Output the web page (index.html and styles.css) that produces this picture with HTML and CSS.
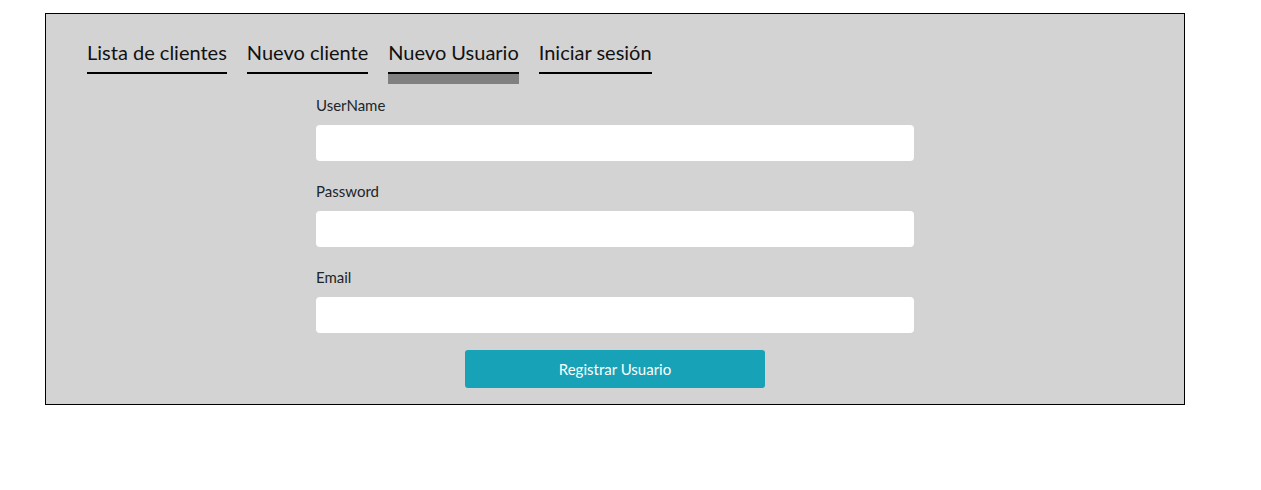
FILE: index.html
```html
<!DOCTYPE html>
<html lang="es">
<head>
<meta charset="utf-8">
<title>Nuevo Usuario</title>
<link rel="stylesheet" href="styles.css">
</head>
<body>
<div class="page">
  <div class="panel">
    <nav class="tabs">
      <a class="tab" href="#">Lista de clientes</a>
      <a class="tab" href="#">Nuevo cliente</a>
      <a class="tab tab-active" href="#">Nuevo Usuario</a>
      <a class="tab" href="#">Iniciar sesión</a>
    </nav>
    <form class="form">
      <div class="field">
        <label class="label" for="u">UserName</label>
        <input class="input" id="u" type="text">
      </div>
      <div class="field">
        <label class="label" for="p">Password</label>
        <input class="input" id="p" type="password">
      </div>
      <div class="field field-last">
        <label class="label" for="e">Email</label>
        <input class="input" id="e" type="email">
      </div>
      <div class="actions">
        <button class="btn" type="button">Registrar Usuario</button>
      </div>
    </form>
  </div>
</div>
</body>
</html>
```
FILE: styles.css
```css
html, body {
  margin: 0;
  padding: 0;
  background: #fff;
}
body {
  font-family: "Segoe UI", "Lato", "Liberation Sans", sans-serif;
  color: #212529;
}
.page {
  padding: 13px 0 0 45px;
}
.panel {
  box-sizing: border-box;
  width: 1140px;
  height: 392px;
  border: 1px solid #000;
  background: #d3d3d3;
  padding: 25px 41px 0;
}
.tabs {
  display: flex;
  gap: 20px;
}
.tab {
  font-size: 20px;
  line-height: 27px;
  padding-bottom: 6px;
  color: #111;
  text-decoration: none;
  border-bottom: 2px solid #000;
}
.tab-active {
  box-shadow: 0 10px 0 #808080;
}
.form {
  width: 598px;
  margin: 20px auto 0;
}
.field {
  margin-bottom: 19px;
}
.field-last {
  margin-bottom: 17px;
}
.label {
  display: block;
  font-size: 15px;
  line-height: 22px;
  margin-bottom: 9px;
}
.input {
  display: block;
  box-sizing: border-box;
  width: 100%;
  height: 36px;
  border: 0;
  border-radius: 4px;
  background: #fff;
  margin: 0;
}
.actions {
  display: flex;
  justify-content: center;
}
.btn {
  width: 300px;
  height: 38px;
  border: 0;
  border-radius: 3px;
  background: #17a2b8;
  color: #fff;
  font-family: inherit;
  font-size: 15px;
  padding: 0;
}
```
